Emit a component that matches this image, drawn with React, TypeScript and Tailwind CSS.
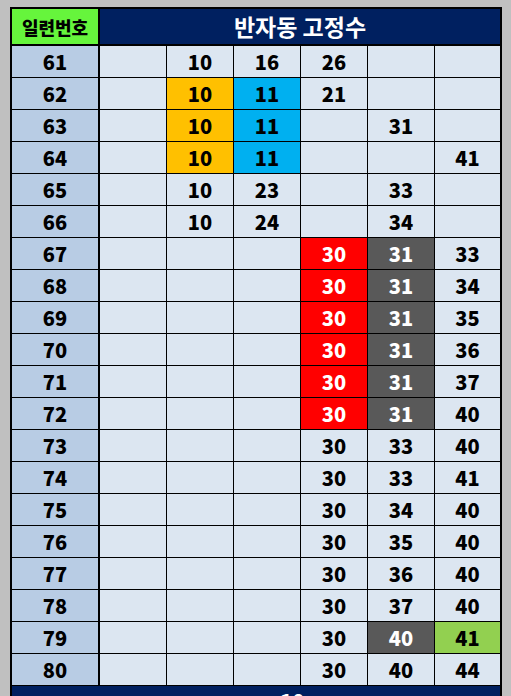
import clsx from 'clsx'

type Tone = 'orange' | 'blue' | 'red' | 'dark' | 'lime'
type Cell = { v: number; tone?: Tone } | null

const TONE: Record<Tone, string> = {
  orange: 'bg-[#ffc000] text-black',
  blue: 'bg-[#00b0f0] text-black',
  red: 'bg-[#ff0000] text-white',
  dark: 'bg-[#595959] text-white',
  lime: 'bg-[#92d050] text-black',
}

const n = (v: number, tone?: Tone): Cell => ({ v, tone })

const ROWS: { no: number; cells: Cell[] }[] = [
  { no: 61, cells: [null, n(10), n(16), n(26), null, null] },
  { no: 62, cells: [null, n(10, 'orange'), n(11, 'blue'), n(21), null, null] },
  { no: 63, cells: [null, n(10, 'orange'), n(11, 'blue'), null, n(31), null] },
  { no: 64, cells: [null, n(10, 'orange'), n(11, 'blue'), null, null, n(41)] },
  { no: 65, cells: [null, n(10), n(23), null, n(33), null] },
  { no: 66, cells: [null, n(10), n(24), null, n(34), null] },
  { no: 67, cells: [null, null, null, n(30, 'red'), n(31, 'dark'), n(33)] },
  { no: 68, cells: [null, null, null, n(30, 'red'), n(31, 'dark'), n(34)] },
  { no: 69, cells: [null, null, null, n(30, 'red'), n(31, 'dark'), n(35)] },
  { no: 70, cells: [null, null, null, n(30, 'red'), n(31, 'dark'), n(36)] },
  { no: 71, cells: [null, null, null, n(30, 'red'), n(31, 'dark'), n(37)] },
  { no: 72, cells: [null, null, null, n(30, 'red'), n(31, 'dark'), n(40)] },
  { no: 73, cells: [null, null, null, n(30), n(33), n(40)] },
  { no: 74, cells: [null, null, null, n(30), n(33), n(41)] },
  { no: 75, cells: [null, null, null, n(30), n(34), n(40)] },
  { no: 76, cells: [null, null, null, n(30), n(35), n(40)] },
  { no: 77, cells: [null, null, null, n(30), n(36), n(40)] },
  { no: 78, cells: [null, null, null, n(30), n(37), n(40)] },
  { no: 79, cells: [null, null, null, n(30), n(40, 'dark'), n(41, 'lime')] },
  { no: 80, cells: [null, null, null, n(30), n(40), n(44)] },
]

const COLS = 'grid grid-cols-[87px_66px_66px_66px_66px_66px_65px] gap-px'
const KR = "font-['Noto_Sans_CJK_KR','Noto_Sans',sans-serif] font-black"
const NUM = "font-['Noto_Sans_CJK_KR','Noto_Sans',sans-serif] font-black text-[20px] leading-none"

export default function App() {
  return (
    <div className="h-[696px] w-full overflow-hidden bg-[#c0c0c0] pl-[10px] pt-[7px]">
      <div className="w-[492px] border-2 border-b-0 border-black bg-black">
        <div className={clsx(COLS, KR, 'mb-[2px] h-[35px]')}>
          <div className="flex items-center justify-center border-r border-black bg-[#66f53c] text-[18px] leading-none text-black">
            일련번호
          </div>
          <div className="col-span-6 flex items-center justify-center bg-[#002060] text-[23px] font-semibold leading-none text-white">
            반자동 고정수
          </div>
        </div>

        <div className={COLS}>
          {ROWS.map((r) => (
            <Row key={r.no} no={r.no} cells={r.cells} />
          ))}
        </div>

        <div className={clsx(NUM, 'mt-px h-[30px] bg-[#002060] pl-[268px] pt-[5px] text-white')}>
          10
        </div>
      </div>
    </div>
  )
}

function Row({ no, cells }: { no: number; cells: Cell[] }) {
  return (
    <>
      <div className={clsx(NUM, 'flex h-[31px] items-center justify-center border-r border-black bg-[#b8cce4] text-black')}>
        {no}
      </div>
      {cells.map((c, i) => (
        <div
          key={i}
          className={clsx(
            NUM,
            'flex h-[31px] items-center justify-center',
            c?.tone ? TONE[c.tone] : 'bg-[#dce6f1] text-black',
          )}
        >
          {c?.v}
        </div>
      ))}
    </>
  )
}
